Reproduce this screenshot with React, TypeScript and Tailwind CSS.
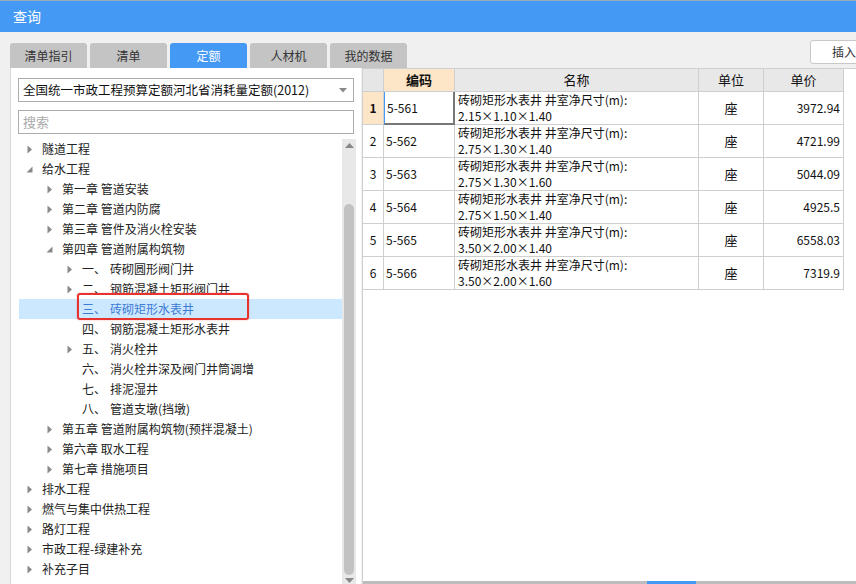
import React from 'react';

const cjk = { fontFamily: '"Noto Sans CJK SC", "Noto Sans", sans-serif' };

type Node = { level: number; label: string; num?: string; arrow: 'right' | 'down' | 'none'; active?: boolean };

const tree: Node[] = [
  { level: 0, label: '隧道工程', arrow: 'right' },
  { level: 0, label: '给水工程', arrow: 'down' },
  { level: 1, label: '第一章 管道安装', arrow: 'right' },
  { level: 1, label: '第二章 管道内防腐', arrow: 'right' },
  { level: 1, label: '第三章 管件及消火栓安装', arrow: 'right' },
  { level: 1, label: '第四章 管道附属构筑物', arrow: 'down' },
  { level: 2, num: '一、', label: '砖砌圆形阀门井', arrow: 'right' },
  { level: 2, num: '二、', label: '钢筋混凝土矩形阀门井', arrow: 'right' },
  { level: 2, num: '三、', label: '砖砌矩形水表井', arrow: 'none', active: true },
  { level: 2, num: '四、', label: '钢筋混凝土矩形水表井', arrow: 'none' },
  { level: 2, num: '五、', label: '消火栓井', arrow: 'right' },
  { level: 2, num: '六、', label: '消火栓井深及阀门井筒调增', arrow: 'none' },
  { level: 2, num: '七、', label: '排泥湿井', arrow: 'none' },
  { level: 2, num: '八、', label: '管道支墩(挡墩)', arrow: 'none' },
  { level: 1, label: '第五章 管道附属构筑物(预拌混凝土)', arrow: 'right' },
  { level: 1, label: '第六章 取水工程', arrow: 'right' },
  { level: 1, label: '第七章 措施项目', arrow: 'right' },
  { level: 0, label: '排水工程', arrow: 'right' },
  { level: 0, label: '燃气与集中供热工程', arrow: 'right' },
  { level: 0, label: '路灯工程', arrow: 'right' },
  { level: 0, label: '市政工程-绿建补充', arrow: 'right' },
  { level: 0, label: '补充子目', arrow: 'right' },
];

const rows = [
  { code: '5-561', size: '2.15×1.10×1.40', price: '3972.94' },
  { code: '5-562', size: '2.75×1.30×1.40', price: '4721.99' },
  { code: '5-563', size: '2.75×1.30×1.60', price: '5044.09' },
  { code: '5-564', size: '2.75×1.50×1.40', price: '4925.5' },
  { code: '5-565', size: '3.50×2.00×1.40', price: '6558.03' },
  { code: '5-566', size: '3.50×2.00×1.60', price: '7319.9' },
];

const tabs = ['清单指引', '清单', '定额', '人材机', '我的数据'];

const Arrow: React.FC<{ kind: Node['arrow'] }> = ({ kind }) => {
  if (kind === 'right')
    return (
      <svg width="6" height="9" viewBox="0 0 6 9">
        <path d="M0.5 0.5 L5 4.5 L0.5 8.5 Z" fill="#8a8a8a" />
      </svg>
    );
  if (kind === 'down')
    return (
      <svg width="7" height="7" viewBox="0 0 7 7">
        <path d="M6.5 0.5 L6.5 6.5 L0.5 6.5 Z" fill="#8a8a8a" />
      </svg>
    );
  return null;
};

const App: React.FC = () => {
  return (
    <div className="w-[856px] h-[584px] bg-[#f0f0f0] overflow-hidden flex flex-col" style={cjk}>
      {/* Title bar */}
      <div className="h-[32px] bg-[#4499f5] border-t border-[#9ab] flex items-center pl-[13px] text-white text-[14px] shrink-0">
        查询
      </div>

      {/* Tabs */}
      <div className="h-[36px] flex items-end pl-[10px] relative shrink-0">
        <div className="flex gap-[3px]">
          {tabs.map((t) => (
            <div
              key={t}
              className={
                t === '定额'
                  ? 'w-[77px] h-[25px] rounded-t-[3px] bg-[#4499f5] text-white text-[12px] flex items-center justify-center'
                  : 'w-[77px] h-[25px] rounded-t-[3px] bg-[#c4c4c4] text-[#333] text-[12px] flex items-center justify-center'
              }
            >
              {t}
            </div>
          ))}
        </div>
        <div className="absolute left-[810px] top-[8px] w-[60px] h-[24px] bg-white border border-[#c8c8c8] rounded-[3px] text-[12px] text-[#333] flex items-center pl-[21px]">
          插入
        </div>
      </div>

      {/* Body */}
      <div className="flex-1 flex min-h-0">
        {/* Left panel */}
        <div className="w-[351px] ml-[10px] bg-white border-l border-[#d8d8d8] flex flex-col min-h-0">
          <div className="mt-[10px] mx-[7px] h-[24px] border border-[#acacac] flex items-center justify-between pl-[4px] pr-[6px] text-[12.5px] text-[#111]">
            <span>全国统一市政工程预算定额河北省消耗量定额(2012)</span>
            <svg width="8" height="5" viewBox="0 0 8 5">
              <path d="M0 0 L8 0 L4 4.5 Z" fill="#888" />
            </svg>
          </div>
          <div className="mt-[8px] mx-[7px] h-[24px] border border-[#acacac] flex items-center pl-[4px] text-[13px] text-[#aaa]">
            搜索
          </div>
          <div className="mt-[5px] flex flex-1 min-h-0">
            <div className="flex-1 ml-[8px] flex flex-col">
              {tree.map((n) => (
                <div
                  key={n.label}
                  className={
                    n.active
                      ? 'h-[20px] shrink-0 flex items-center bg-[#cce8ff] text-[#3d7bd6] text-[12px] relative'
                      : 'h-[20px] shrink-0 flex items-center text-[#222] text-[12px]'
                  }
                  style={{ paddingLeft: n.level * 20 }}
                >
                  <span className="w-[20px] flex justify-center items-center pl-[1px]">
                    <Arrow kind={n.arrow} />
                  </span>
                  <span className="ml-[3px] flex">
                    {n.num && <span className="w-[28px]">{n.num}</span>}
                    <span>{n.label}</span>
                  </span>
                  {n.active && (
                    <div className="absolute left-[58px] top-[-6px] w-[172px] h-[27px] border-2 border-[#e8322e] rounded-[3px] shadow-[0_0_2px_rgba(232,50,46,0.4)]" />
                  )}
                </div>
              ))}
            </div>
            {/* Scrollbar */}
            <div className="w-[14px] bg-[#e8e8e8] flex flex-col items-center mr-[5px]">
              <svg width="9" height="5" viewBox="0 0 9 5" className="mt-[4px]">
                <path d="M0 5 L4.5 0 L9 5 Z" fill="#888" />
              </svg>
              <div className="w-[10px] mt-[56px] flex-1 bg-[#c2c2c2] rounded-full" />
              <svg width="9" height="5" viewBox="0 0 9 5" className="mt-[3px] mb-[1px]">
                <path d="M0 0 L9 0 L4.5 5 Z" fill="#888" />
              </svg>
            </div>
          </div>
        </div>

        {/* Right panel */}
        <div className="ml-[1px] flex-1 bg-white border-l border-t border-[#cfcfcf] flex flex-col min-h-0 text-[12px] text-[#111]">
          <div className="grid grid-cols-[21px_71px_244px_65px_80px]">
            <div className="h-[23px] bg-[#e6e6e6] border-r border-b border-[#cfcfcf]" />
            <div className="h-[23px] bg-[#fde6c8] border-r border-b border-[#cfcfcf] flex items-center justify-center font-bold text-[13px]">
              编码
            </div>
            <div className="h-[23px] bg-[#e8e8e8] border-r border-b border-[#cfcfcf] flex items-center justify-center text-[13px]">
              名称
            </div>
            <div className="h-[23px] bg-[#e8e8e8] border-r border-b border-[#cfcfcf] flex items-center justify-center text-[13px]">
              单位
            </div>
            <div className="h-[23px] bg-[#e8e8e8] border-r border-b border-[#cfcfcf] flex items-center justify-center text-[13px]">
              单价
            </div>
            {rows.map((r, i) => (
              <React.Fragment key={r.code}>
                <div
                  className={
                    i === 0
                      ? 'h-[33px] bg-[#fde6c8] border-r border-b border-[#cfcfcf] flex items-center justify-center font-bold'
                      : 'h-[33px] border-r border-b border-[#cfcfcf] flex items-center justify-center'
                  }
                >
                  {i + 1}
                </div>
                <div
                  className={
                    i === 0
                      ? 'h-[33px] border-l border-l-[#4499f5] border-r-2 border-b-2 border-r-[#777] border-b-[#777] flex items-center pl-[2px]'
                      : 'h-[33px] border-r border-b border-[#cfcfcf] flex items-center pl-[2px]'
                  }
                >
                  {r.code}
                </div>
                <div className="h-[33px] border-r border-b border-[#cfcfcf] flex flex-col pl-[3px] leading-[16px] overflow-hidden">
                  <span className="block">砖砌矩形水表井 井室净尺寸(m):</span>
                  <span className="block">{r.size}</span>
                </div>
                <div className="h-[33px] border-r border-b border-[#cfcfcf] flex items-center justify-center text-[13px]">
                  座
                </div>
                <div className="h-[33px] border-r border-b border-[#cfcfcf] flex items-center justify-end pr-[3px]">
                  {r.price}
                </div>
              </React.Fragment>
            ))}
          </div>
          <div className="flex-1" />
          <div className="h-[3px] bg-[#bdbdbd] flex shrink-0">
            <div className="ml-[284px] w-[49px] bg-[#4499f5]" />
          </div>
        </div>
      </div>
    </div>
  );
};

export default App;
